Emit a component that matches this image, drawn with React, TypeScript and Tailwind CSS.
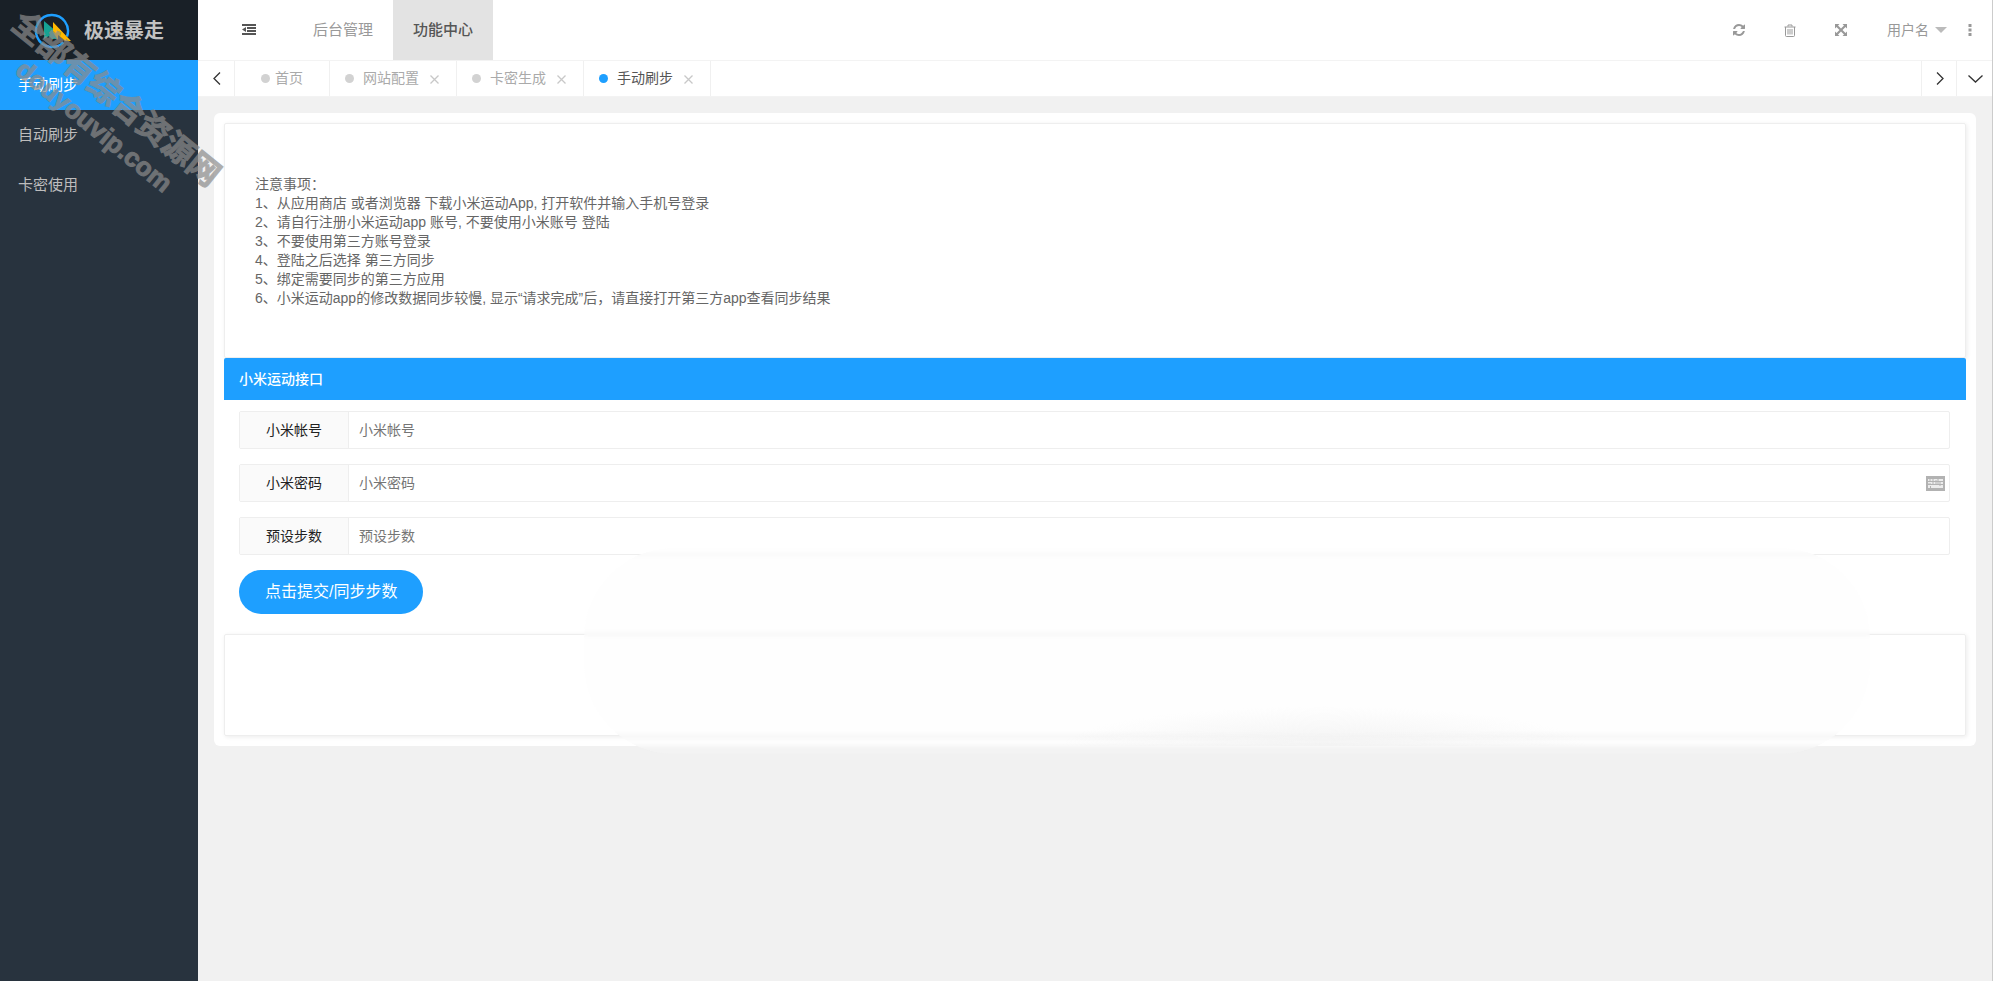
import React, { useState } from 'react';

// ---- icons ----

function LogoIcon() {
  return (
    <svg viewBox="0 0 38 38" className="w-[38px] h-[38px] shrink-0" aria-hidden="true">
      <path d="M29.300 30.300A16 16 0 1 1 33 24.500" fill="none" stroke="#1e9fff" strokeWidth="2.400" />
      <path d="M10 9L23 20V27H18L15 24L10 27Z" fill="#16a394" />
      <path d="M19 10L37 29H31L24 23V28L19 20Z" fill="#ffb800" />
    </svg>
  );
}

function OutdentIcon() {
  return (
    <svg viewBox="0 0 14 12" className="w-[14px] h-3" fill="currentColor" aria-hidden="true">
      <path d="M0 0h14v2H0zM5 3h9v2H5zM5 6h9v2H5zM0 9h14v2H0zM4 3v5L0 5.500z" />
    </svg>
  );
}

function RefreshIcon() {
  return (
    <svg viewBox="0 0 1536 1536" className="w-3 h-3" fill="currentColor" aria-hidden="true">
      <path d="M1511 928q0 5-1 7-64 268-268 434.500t-478 166.500q-146 0-282.500-55t-243.500-157l-129 129q-19 19-45 19t-45-19-19-45v-448q0-26 19-45t45-19h448q26 0 45 19t19 45-19 45l-137 137q71 66 161 102t187 36q134 0 250-65t186-179q11-17 53-117 8-23 30-23h192q13 0 22.500 9.500t9.500 22.500zm25-800v448q0 26-19 45t-45 19h-448q-26 0-45-19t-19-45 19-45l138-138q-148-137-349-137-134 0-250 65t-186 179q-11 17-53 117-8 23-30 23h-199q-13 0-22.500-9.500t-9.500-22.500v-7q65-268 270-434.500t480-166.500q146 0 284 55.500t245 156.500l130-129q19-19 45-19t45 19 19 45z" />
    </svg>
  );
}

function TrashIcon() {
  return (
    <svg viewBox="0 0 12 13" className="w-3 h-[13px]" fill="none" stroke="currentColor" aria-hidden="true">
      <path d="M0.500 3h11M4 2.500V1h4v1.500M1.500 3v8.500q0 1 1 1h7q1 0 1-1V3M4 5v5.500M6 5v5.500M8 5v5.500" />
    </svg>
  );
}

function ExpandIcon() {
  return (
    <svg viewBox="0 0 12 12" className="w-3 h-3" fill="currentColor" aria-hidden="true">
      <path d="M0 0h4.500L3 1.500 6 4.500 9 1.500 7.500 0H12v4.500L10.500 3l-3 3 3 3L12 7.500V12H7.500L9 10.500l-3-3-3 3L4.500 12H0V7.500L1.500 9l3-3-3-3L0 4.500z" />
    </svg>
  );
}

function DotsIcon() {
  return (
    <svg viewBox="0 0 4 12" className="w-1 h-3" fill="currentColor" aria-hidden="true">
      <path d="M0.500 0h3v3h-3zM0.500 4.500h3v3h-3zM0.500 9h3v3h-3z" />
    </svg>
  );
}

function KeyboardIcon() {
  return (
    <svg viewBox="0 0 19 15" className="w-[19px] h-[15px]" aria-hidden="true">
      <path d="M0 0h19v15H0z" fill="#b2b2b2" />
      <path d="M2 3h15v2H2zM2 6h15v2H2zM2 9h15v1H2zM2 10h2v2H2zM5 10h12v2H5z" fill="#ececec" />
      <path d="M4 3v3M7 3v6M10 4v5M12 3v6M14 6v4M2 8h3" stroke="#b2b2b2" strokeWidth="1" />
    </svg>
  );
}

type ChevronProps = { d: string; className: string; viewBox: string };

function Chevron({ d, className, viewBox }: ChevronProps) {
  return (
    <svg viewBox={viewBox} className={className} fill="none" stroke="currentColor" strokeWidth="1.300" aria-hidden="true">
      <path d={d} />
    </svg>
  );
}

// ---- data ----

const MENU = ['手动刷步', '自动刷步', '卡密使用'];

const MODULES = ['后台管理', '功能中心'];

const TABS = ['首页', '网站配置', '卡密生成', '手动刷步'];

const NOTES = [
  '注意事项：',
  '1、从应用商店 或者浏览器 下载小米运动App, 打开软件并输入手机号登录',
  '2、请自行注册小米运动app 账号, 不要使用小米账号 登陆',
  '3、不要使用第三方账号登录',
  '4、登陆之后选择 第三方同步',
  '5、绑定需要同步的第三方应用',
  '6、小米运动app的修改数据同步较慢, 显示“请求完成”后，请直接打开第三方app查看同步结果',
];

// ---- layout parts ----

function Sidebar() {
  const [active, setActive] = useState(0);
  return (
    <aside className="w-[198px] shrink-0 bg-[#28333e]">
      <div className="flex items-center h-15 pt-[2px] pl-[34px] gap-3 bg-[#192027]">
        <LogoIcon />
        <span className="text-xl font-bold text-[#c2c2c2]">极速暴走</span>
      </div>
      <nav className="flex flex-col">
        {MENU.map((name, i) => (
          <a
            key={name}
            href="#"
            onClick={() => setActive(i)}
            className={`h-[50px] leading-[50px] pl-[18px] text-[15px] ${i === active ? 'bg-[#1e9fff] text-white' : 'text-[#bdbdbd]'}`}
          >
            {name}
          </a>
        ))}
      </nav>
    </aside>
  );
}

function Header() {
  const [active, setActive] = useState(1);
  return (
    <header className="flex items-center h-15 shrink-0 bg-white text-[#999]">
      <button type="button" title="收起菜单" className="ml-11 mr-[37px] text-[#555]">
        <OutdentIcon />
      </button>
      <nav className="flex">
        {MODULES.map((name, i) => (
          <a
            key={name}
            href="#"
            onClick={() => setActive(i)}
            className={`h-15 leading-[60px] px-5 text-[15px] ${i === active ? 'bg-[#e3e3e3] text-[#555] font-medium' : ''}`}
          >
            {name}
          </a>
        ))}
      </nav>
      <div className="flex items-center ml-auto pr-5">
        <button type="button" title="刷新" className="mr-[39px]">
          <RefreshIcon />
        </button>
        <button type="button" title="清理" className="mr-[39px]">
          <TrashIcon />
        </button>
        <button type="button" title="全屏" className="mr-10">
          <ExpandIcon />
        </button>
        <button type="button" className="flex items-center gap-[6px] mr-[21px] text-sm">
          用户名
          <span className="border-x-6 border-t-6 border-x-transparent border-t-[#bbb]" />
        </button>
        <button type="button" title="更多">
          <DotsIcon />
        </button>
      </div>
    </header>
  );
}

function TabBar() {
  const [active, setActive] = useState(3);
  const cell = 'flex items-center justify-center shrink-0 pl-px text-[#333]';
  return (
    <div className="flex h-[37px] shrink-0 bg-white border-y border-[#f3f3f3] text-sm">
      <button type="button" title="向左" className={`${cell} w-[37px] border-r border-[#f0f0f0]`}>
        <Chevron viewBox="0 0 8 13" className="w-2 h-[13px]" d="M7 0.500L1 6.500L7 12.500" />
      </button>
      {TABS.map((name, i) => (
        <div
          key={name}
          className={`flex items-center border-r border-[#f0f0f0] ${i === 0 ? 'pl-[26px] pr-[26px]' : 'pl-[15px] pr-[17px]'} ${i === active ? 'text-[#555]' : 'text-[#aaa]'}`}
        >
          <span className={`w-[9px] h-[9px] rounded-full ${i === active ? 'bg-[#1e9fff]' : 'bg-[#d2d2d2]'}`} />
          <button type="button" onClick={() => setActive(i)} className={`pb-[2px] ${i === 0 ? 'ml-[5px]' : 'ml-[9px]'}`}>
            {name}
          </button>
          {i > 0 && (
            <button type="button" title="关闭" className="ml-[11px] mt-[2px] text-[#c8c8c8]">
              <Chevron viewBox="0 0 9 9" className="w-[9px] h-[9px]" d="M0.500 0.500L8.500 8.500M8.500 0.500L0.500 8.500" />
            </button>
          )}
        </div>
      ))}
      <div className="flex ml-auto">
        <button type="button" title="向右" className={`${cell} w-[35px] border-l border-[#f0f0f0]`}>
          <Chevron viewBox="0 0 8 13" className="w-2 h-[13px]" d="M1 0.500L7 6.500L1 12.500" />
        </button>
        <button type="button" title="展开" className={`${cell} w-9 border-l border-[#f0f0f0]`}>
          <Chevron viewBox="0 0 15 8" className="w-[15px] h-2" d="M0.500 0.500L7.500 7L14.500 0.500" />
        </button>
      </div>
    </div>
  );
}

type FieldProps = {
  id: string;
  label: string;
  type?: string;
  children?: React.ReactNode;
};

function Field({ id, label, type = 'text', children }: FieldProps) {
  return (
    <div className="flex items-center h-[38px] border border-[#eee] rounded-xs bg-white">
      <label
        htmlFor={id}
        className="flex items-center justify-center w-[109px] h-full shrink-0 bg-[#fafafa] border-r border-[#eee] text-[#222]"
      >
        {label}
      </label>
      <input
        id={id}
        type={type}
        placeholder={label}
        className="flex-1 min-w-0 h-full pl-[10px] placeholder:text-[#757575] focus:outline-none"
      />
      {children}
    </div>
  );
}

function StepForm() {
  return (
    <form className="text-sm" onSubmit={(e) => e.preventDefault()}>
      <h2 className="h-[42px] leading-[42px] px-[15px] bg-[#1e9fff] text-white rounded-t-xs font-medium">小米运动接口</h2>
      <div className="flex flex-col items-stretch gap-[15px] pt-[11px] pb-5 pl-[15px] pr-4">
        <Field id="account" label="小米帐号" />
        <Field id="password" label="小米密码" type="password">
          <button type="button" title="软键盘" className="mr-1">
            <KeyboardIcon />
          </button>
        </Field>
        <Field id="steps" label="预设步数" />
        <button
          type="submit"
          className="self-start h-11 px-[26px] rounded-full bg-[#1e9fff] text-white text-base whitespace-nowrap"
        >
          点击提交/同步步数
        </button>
      </div>
    </form>
  );
}

function Watermark() {
  return (
    <div className="absolute left-[-27px] top-[78px] w-[264px] rotate-[39deg] text-center font-bold whitespace-nowrap text-[#8c8c8c] opacity-70 [-webkit-text-stroke:1px_#8c8c8c] pointer-events-none">
      <div className="text-[32px] leading-[34px]">全部有综合资源网</div>
      <div className="text-[26px] leading-[36px]">douyouvip.com</div>
    </div>
  );
}

export default function App() {
  return (
    <div className="relative flex min-h-screen overflow-hidden bg-[#f1f1f1] border-r border-[#ccc] font-['Liberation_Sans','Noto_Sans_CJK_SC',sans-serif]">
      <Sidebar />
      <div className="flex flex-col flex-1 min-w-0">
        <Header />
        <TabBar />
        <main className="relative m-4 p-[10px] bg-white rounded-md">
          <section className="pt-[51px] px-[30px] pb-[49px] border border-[#eee] rounded-xs shadow-[1px_1px_4px_rgb(0_0_0/8%)] text-sm leading-[19px] text-[#666]">
            {NOTES.map((line) => (
              <p key={line}>{line}</p>
            ))}
          </section>
          <StepForm />
          <section className="h-[102px] border border-[#eee] rounded-xs shadow-[1px_1px_4px_rgb(0_0_0/8%)]" />
          {/* frosted haze over the lower part of the panel */}
          <div className="absolute left-[21%] right-[6%] top-[435px] -bottom-2 rounded-[90px] bg-[#fcfcfc]/20 backdrop-blur-[2px] pointer-events-none" />
          <div className="absolute left-[48%] right-[22%] bottom-0 h-10 bg-radial-[at_50%_100%] from-[#f1f1f1]/80 to-transparent to-70% pointer-events-none" />
        </main>
      </div>
      <Watermark />
    </div>
  );
}
